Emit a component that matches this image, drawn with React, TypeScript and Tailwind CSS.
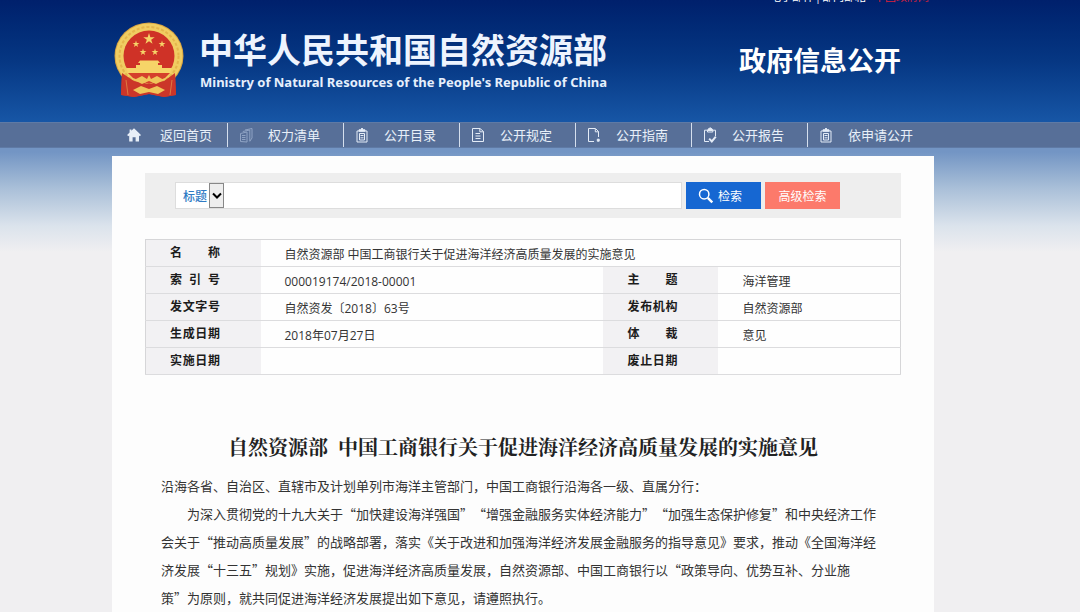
import React from "react";

const icon = "h-4 w-4 shrink-0 fill-none stroke-[#e4ecf7]";

function HomeIcon() {
  return (
    <svg viewBox="0 0 16 16" className="h-4 w-4 shrink-0 fill-[#e8eff8]">
      <path d="M8 1.200 15 8 13.800 9.200 13 8.500V14.500H9.600V10.200H6.600V14.500H3.200V8.500L2.300 9.200 1.100 8 3.600 5.500V2.500H5.400V3.800Z" />
    </svg>
  );
}

function StackIcon() {
  return (
    <svg viewBox="0 0 16 16" className="h-4 w-4 shrink-0 fill-none stroke-[#8fa3c4]">
      <path d="M7 3 14 1.500V11L12 14M4.800 4.500 11.800 3V14.500M2.500 6.500 9 5V15L2.500 14.500ZM4 8.500H7.500M4 10.500H7.500M4 12.500H7.500" />
    </svg>
  );
}

function BadgeIcon() {
  return (
    <svg viewBox="0 0 16 16" className={icon}>
      <path d="M3 4H13V15H3ZM5.500 6.500H10.500V13H5.500ZM6.500 8.500H9.500M6.500 10.800H9.500" />
      <path d="M5 4.200V2.800H6.600L8 1 9.400 2.800H11V4.200Z" className="fill-[#e4ecf7]" />
    </svg>
  );
}

function PageIcon() {
  return (
    <svg viewBox="0 0 16 16" className={icon}>
      <path d="M2.500 1.500H10L13.500 4.500V14.500H2.500ZM9.800 2V4.800H13.500M5.500 6.500H10M5.500 9H10.500M5.500 11.500H10.500" />
    </svg>
  );
}

function GuideIcon() {
  return (
    <svg viewBox="0 0 16 16" className={icon}>
      <path d="M8 14.500H2.500V1.500H9.500L12.500 4.500V10M9.300 2V4.800H12.500" />
      <path d="M11.300 12.200H13.200V14.200H11.300Z" className="fill-[#e4ecf7]" />
    </svg>
  );
}

function ReportIcon() {
  return (
    <svg viewBox="0 0 16 16" className={icon}>
      <path d="M7 14.500H2.500V3.200H13.500V9M5.500 3.200V5H10.800V3.200" />
      <path d="M6 3.500V2.200L8.200 .8 10.400 2.200V3.500Z" className="fill-[#e4ecf7]" />
      <path d="m7.200 11.600 2.600 2.800 4-4.800" className="stroke-2" />
    </svg>
  );
}

const navItems = [
  { label: "返回首页", Icon: HomeIcon },
  { label: "权力清单", Icon: StackIcon },
  { label: "公开目录", Icon: BadgeIcon },
  { label: "公开规定", Icon: PageIcon },
  { label: "公开指南", Icon: GuideIcon },
  { label: "公开报告", Icon: ReportIcon },
  { label: "依申请公开", Icon: BadgeIcon },
];

const star = "M0-1 .225-.309 .951-.309 .363.118 .588.809 0 .382-.588.809-.363.118-.951-.309-.225-.309Z";

function Emblem() {
  return (
    <svg viewBox="0 0 70 76" className="h-[76px] w-[70px] shrink-0" role="img" aria-label="国徽">
      <path d="M8 50 7 73 20 75 35 72 50 75 62 73 61 50Z" fill="#c9352a" />
      <ellipse cx="35" cy="34" rx="34.500" ry="33.500" fill="#d9a441" />
      <ellipse cx="35" cy="34" rx="33.500" ry="32.500" fill="#f0cd62" />
      <ellipse cx="35" cy="34" rx="29.500" ry="29" fill="none" stroke="#e5b54c" strokeWidth="2" strokeDasharray="3 2" />
      <circle cx="35" cy="34" r="25.500" fill="#cf3227" />
      <g fill="#f6d468">
        <path d={star} transform="translate(35 17) scale(6)" />
        <path d={star} transform="translate(22 22) scale(3.600)" />
        <path d={star} transform="translate(48 22) scale(3.600)" />
        <path d={star} transform="translate(29 30) scale(3.600)" />
        <path d={star} transform="translate(41 30) scale(3.600)" />
        <path d="M26 38.500H44L46 41H44V43H48V46H58L56 51H14L12 46H22V43H26V41H24Z" />
      </g>
      <path d="M8 51 20 59 35 62 50 59 61 51 62 73 50 75 35 72 20 75 7 73Z" fill="#cb3629" />
      <path d="M14 51H56L51 56 43 59 35 62 27 59 19 56Z" fill="#d5402c" />
      <path d="M20 58 28 54 33 57 35 53 37 57 43 54 50 58 42 62 35 59 28 62Z" fill="#efc65a" />
      <path d="M19 68 27 64 35 67 43 64 51 68 44 72 35 70 26 72Z" fill="#efc65a" />
      <path d="M12 58 14 73M58 58 56 73" stroke="#dc7a42" strokeWidth="1" fill="none" />
    </svg>
  );
}

const labelCell = "bg-[#f2f1f3] pl-6 text-left align-middle font-bold text-[#1c1c1c]";
const valueCell = "pt-1 pl-6 align-middle";
const labelText = "flex w-[50px] justify-between leading-4";

function Label({ children }: { children: string }) {
  return (
    <span className={labelText}>
      {Array.from(children).map((c, i) => (
        <span key={i}>{c}</span>
      ))}
    </span>
  );
}

const rows = [
  ["索引号", "000019174/2018-00001", "主题", "海洋管理"],
  ["发文字号", "自然资发〔2018〕63号", "发布机构", "自然资源部"],
  ["生成日期", "2018年07月27日", "体裁", "意见"],
  ["实施日期", "", "废止日期", ""],
];

export default function App() {
  return (
    <div className="min-h-screen bg-[#f0eff1] bg-[linear-gradient(to_bottom,#7395c4_0px,#7395c4_152px,#a9bfd8_188px,#dbe3ec_226px,#f0eff1_252px)] font-['Noto_Sans_CJK_SC',sans-serif] text-[#333]">
      <header className="h-[122px] overflow-hidden bg-linear-to-b from-[#00206c] via-[#063783] to-[#1756a6] pr-9">
        <div className="mx-auto max-w-[822px]">
          <div className="-mt-3 flex h-4 justify-end gap-2 pr-1 text-[11px] leading-4">
            <span className="text-white">电子邮件 | 部门邮箱</span>
            <a href="#gov" className="text-[#d8203a]">中国政府网</a>
          </div>
          <div className="flex items-start pt-[18px] pr-8 pl-[3px]">
            <Emblem />
            <div className="ml-[15px] grow pt-0.5">
              <h1 className="text-[34px] leading-[49px] font-bold whitespace-nowrap text-[#eef4fe]">中华人民共和国自然资源部</h1>
              <p className="pl-px font-['Noto_Sans',sans-serif] text-[13px] leading-[18px] font-bold whitespace-nowrap text-[#e6effc]">
                Ministry of Natural Resources of the People's Republic of China
              </p>
            </div>
            <p className="pt-[18px] text-[27px] leading-10 font-bold whitespace-nowrap text-white">政府信息公开</p>
          </div>
        </div>
      </header>

      <nav className="border-y border-[#5f7aa5] bg-[#576f98] pr-9">
        <ul className="mx-auto flex max-w-[822px]">
          {navItems.map(({ label, Icon }, i) => (
            <li key={label} className={i === 0 ? "w-[116px]" : "w-[116px] border-l border-[#d5dfee]"}>
              <a
                href="#nav"
                className={
                  i === 0
                    ? "flex h-6 items-center gap-[18px] pl-[15px] text-[13px] whitespace-nowrap text-[#e8eff8]"
                    : "flex h-6 items-center gap-[14px] pl-[10px] text-[13px] whitespace-nowrap text-[#e8eff8]"
                }
              >
                <Icon />
                {label}
              </a>
            </li>
          ))}
        </ul>
      </nav>

      <div className="pt-2 pr-[34px]">
        <main className="mx-auto min-h-[456px] max-w-[822px] bg-[#fdfdfd] px-[33px] pt-[17px]">
          <form className="flex h-[45px] items-center bg-[#eee] pl-[30px] text-xs" onSubmit={(e) => e.preventDefault()}>
            <div className="flex h-[27px] w-[507px] border border-[#ddd] bg-white">
              <div className="relative flex">
                <select aria-label="检索字段" className="w-12 appearance-none pl-[7px] font-medium text-[#2f7ac4]">
                  <option>标题</option>
                </select>
                <span className="pointer-events-none absolute inset-y-0 right-0 flex w-[15px] items-center justify-center border border-[#888] bg-[#eee]">
                  <svg viewBox="0 0 10 8" className="h-2 w-2.5 fill-none stroke-black stroke-2">
                    <path d="m1 1.500 4 4 4-4" />
                  </svg>
                </span>
              </div>
              <input aria-label="检索内容" type="text" className="min-w-0 grow px-2 outline-none" />
            </div>
            <button type="submit" className="ml-1 flex h-[27px] w-[75px] items-center gap-1 bg-[#1667d2] pl-3 text-white">
              <svg viewBox="0 0 16 16" className="h-4 w-4 fill-none stroke-white">
                <circle cx="6.200" cy="6.200" r="4.700" strokeWidth="1.500" />
                <path d="m9.800 9.800 4.500 4.500" strokeWidth="2.400" />
              </svg>
              检索
            </button>
            <button type="button" className="ml-1 h-[27px] w-[75px] bg-[#fc7a6b] text-white">高级检索</button>
          </form>

          <table className="mt-[21px] w-full table-fixed border-collapse border border-[#d6d6d8] bg-[#fefefe] font-['Open_Sans','Noto_Sans_CJK_SC',sans-serif] text-xs">
            <colgroup>
              <col className="w-[115px]" />
              <col />
              <col className="w-[115px]" />
              <col className="w-[182px]" />
            </colgroup>
            <tbody>
              <tr className="h-[27px] border-b border-[#dcdcde]">
                <th scope="row" className={labelCell}><Label>名称</Label></th>
                <td colSpan={3} className={valueCell}>自然资源部 中国工商银行关于促进海洋经济高质量发展的实施意见</td>
              </tr>
              {rows.map(([a, b, c, d]) => (
                <tr key={a} className="h-[27px] border-b border-[#dcdcde]">
                  <th scope="row" className={labelCell}><Label>{a}</Label></th>
                  <td className={valueCell}>{b}</td>
                  <th scope="row" className={labelCell}><Label>{c}</Label></th>
                  <td className={valueCell}>{d}</td>
                </tr>
              ))}
            </tbody>
          </table>

          <article className="px-4 pt-14">
            <h2 className="text-center font-['Noto_Serif_CJK_SC','Noto_Sans_CJK_SC',serif] text-xl leading-8 font-bold text-[#222]">
              自然资源部&nbsp; 中国工商银行关于促进海洋经济高质量发展的实施意见
            </h2>
            <div className="mt-[9px] text-[13px] leading-7 whitespace-nowrap [text-spacing-trim:space-all]">
              <p>沿海各省、自治区、直辖市及计划单列市海洋主管部门，中国工商银行沿海各一级、直属分行：</p>
              <p className="indent-[26px]">为深入贯彻党的十九大关于“加快建设海洋强国”“增强金融服务实体经济能力”“加强生态保护修复”和中央经济工作</p>
              <p>会关于“推动高质量发展”的战略部署，落实《关于改进和加强海洋经济发展金融服务的指导意见》要求，推动《全国海洋经</p>
              <p>济发展“十三五”规划》实施，促进海洋经济高质量发展，自然资源部、中国工商银行以“政策导向、优势互补、分业施</p>
              <p>策”为原则，就共同促进海洋经济发展提出如下意见，请遵照执行。</p>
            </div>
          </article>
        </main>
      </div>
    </div>
  );
}
